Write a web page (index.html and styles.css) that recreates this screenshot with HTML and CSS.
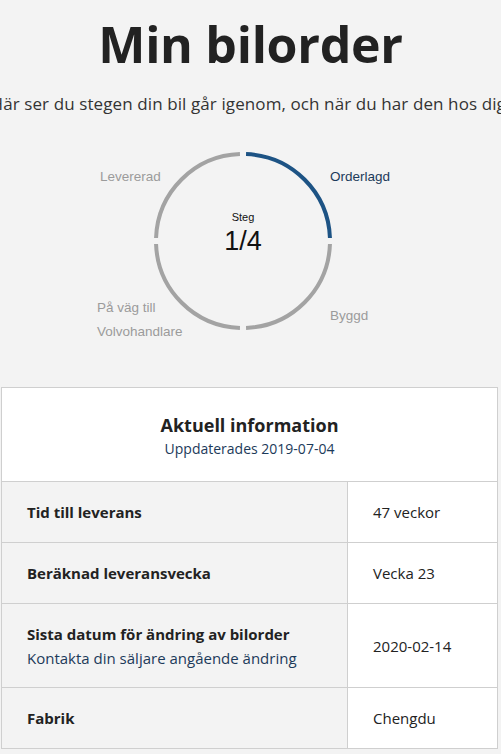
FILE: index.html
```html
<!DOCTYPE html>
<html lang="sv">
<head>
    <meta charset="UTF-8">
    <meta name="viewport" content="width=device-width, initial-scale=1.0">
    <title>Min bilorder</title>
    <link rel="stylesheet" href="styles.css">
</head>
<body>
    <div class="page">
        <h1 class="title">Min bilorder</h1>
        <p class="intro">Här ser du stegen din bil går igenom, och när du har den hos dig.</p>

        <!-- stegcirkel -->
        <div class="progress">
            <svg class="ring" width="200" height="200" viewBox="0 0 200 200">
                <path class="arc done" d="M103.04 13.05 A87 87 0 0 1 186.95 96.96"/>
                <path class="arc" d="M186.95 103.04 A87 87 0 0 1 103.04 186.95"/>
                <path class="arc" d="M96.96 186.95 A87 87 0 0 1 13.05 103.04"/>
                <path class="arc" d="M13.05 96.96 A87 87 0 0 1 96.96 13.05"/>
            </svg>
            <div class="step-count">
                <span class="step-label">Steg</span>
                <span class="step-value">1/4</span>
            </div>
            <span class="stage stage-ordered">Orderlagd</span>
            <span class="stage stage-built">Byggd</span>
            <span class="stage stage-transit">På väg till<br>Volvohandlare</span>
            <span class="stage stage-delivered">Levererad</span>
        </div>

        <!-- aktuell information -->
        <table class="info">
            <tr>
                <th class="info-head" colspan="2">
                    <h2>Aktuell information</h2>
                    <span class="updated">Uppdaterades 2019-07-04</span>
                </th>
            </tr>
            <tr>
                <td class="label">Tid till leverans</td>
                <td class="value">47 veckor</td>
            </tr>
            <tr>
                <td class="label">Beräknad leveransvecka</td>
                <td class="value">Vecka 23</td>
            </tr>
            <tr>
                <td class="label">Sista datum för ändring av bilorder
                    <span class="note">Kontakta din säljare angående ändring</span>
                </td>
                <td class="value">2020-02-14</td>
            </tr>
            <tr>
                <td class="label">Fabrik</td>
                <td class="value">Chengdu</td>
            </tr>
        </table>
    </div>
</body>
</html>
```

FILE: styles.css
```css
body {
    font-family: "Liberation Sans", Arial, sans-serif;
    background-color: #f3f3f3;
    color: #222;
    margin: 0;
    padding: 0;
    overflow: hidden;
}

.page {
    width: 501px;
    overflow: hidden;
}

.title {
    font-family: "Open Sans", sans-serif;
    font-size: 50px;
    font-weight: 700;
    letter-spacing: -0.3px;
    text-align: center;
    color: #222;
    margin: 0;
    padding-top: 6px;
    line-height: 76px;
}

.intro {
    font-family: "Open Sans", sans-serif;
    font-size: 17px;
    letter-spacing: 0.1px;
    color: #333;
    white-space: nowrap;
    display: flex;
    justify-content: center;
    margin: 11px 0 0;
    line-height: 22px;
}

.progress {
    position: relative;
    height: 272px;
}

.ring {
    position: absolute;
    left: 143px;
    top: 26px;
}

.arc {
    fill: none;
    stroke: #a3a3a3;
    stroke-width: 4;
}

.arc.done {
    stroke: #1d5384;
}

.step-count {
    position: absolute;
    left: 193px;
    top: 95px;
    width: 100px;
    display: flex;
    flex-direction: column;
    align-items: center;
    color: #111;
}

.step-label {
    font-size: 11px;
    line-height: 14px;
}

.step-value {
    font-size: 27px;
    line-height: 34px;
}

.stage {
    position: absolute;
    font-size: 13.5px;
    line-height: 24px;
    color: #9b9b9b;
}

.stage-ordered {
    left: 330px;
    top: 50px;
    color: #1c3a5a;
}

.stage-built {
    left: 330px;
    top: 189px;
}

.stage-transit {
    left: 97px;
    top: 181px;
}

.stage-delivered {
    left: 100px;
    top: 50px;
}

.info {
    margin-left: 1px;
    width: 497px;
    border-collapse: collapse;
    font-family: "Open Sans", sans-serif;
    font-size: 15px;
    color: #222;
}

.info td, .info th {
    border: 1px solid #cfcfcf;
}

.info-head {
    background-color: #fff;
    height: 93px;
    padding: 0;
    font-weight: 400;
}

.info-head h2 {
    font-size: 18px;
    margin: 2px 0 2px;
    line-height: 22px;
}

.updated {
    font-size: 14px;
    color: #1c3a5a;
}

.label {
    width: 320px;
    padding: 0 0 0 25px;
    height: 60px;
    font-weight: 700;
    background-color: #f3f3f3;
}

.note {
    display: block;
    font-weight: 400;
    color: #1c3a5a;
    margin-top: 4px;
}

.value {
    background-color: #fff;
    padding: 0 0 0 25px;
}

.info tr:nth-child(4) .label {
    height: 83px;
}
```
